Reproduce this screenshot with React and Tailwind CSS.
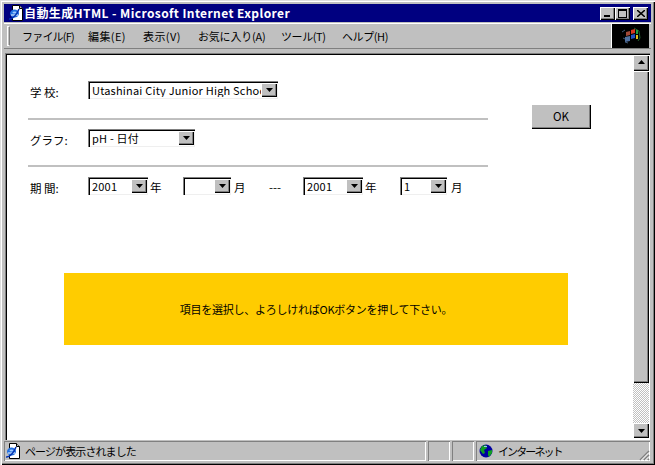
import React from 'react';

const font = { fontFamily: '"Noto Sans CJK JP", "Liberation Sans", sans-serif' };

const raised = 'shadow-[inset_1px_1px_0_#fff,inset_-1px_-1px_0_#000,inset_-2px_-2px_0_#808080]';
const panel = 'shadow-[inset_1px_1px_0_#808080,inset_-1px_-1px_0_#fff]';

function IeIcon() {
  return (
    <svg width="16" height="16" viewBox="0 0 16 16" className="shrink-0">
      <path d="M4.5 .5h7l3 3v12h-10z" fill="#fff" stroke="#000" />
      <path d="M11.5 .5v3h3" fill="#c0c0c0" stroke="#000" />
      <ellipse cx="6.5" cy="8.5" rx="4.5" ry="4" fill="#2070e0" />
      <ellipse cx="6.5" cy="7.5" rx="2" ry="1" fill="#a0c8ff" />
      <path d="M3 9.5h7v1H3z" fill="#fff" />
      <path d="M1 14c3 .5 8-4 10-10" fill="none" stroke="#0030b0" strokeWidth="1.5" />
    </svg>
  );
}

function Globe() {
  return (
    <svg width="14" height="14" viewBox="0 0 14 14" className="shrink-0">
      <circle cx="7" cy="7" r="6.5" fill="#0000a0" />
      <path d="M3 2l4-1 1 3-3 2 1 3-2 1-3-4zM9 7l4-1 0 3-3 4-1-2z" fill="#10a020" />
      <path d="M5 2h3v1H5z" fill="#a0c0ff" />
    </svg>
  );
}

function CtrlButton({ children, className = '' }) {
  return (
    <div className={`w-[15px] h-[13px] bg-[#c0c0c0] flex items-center justify-center ${raised} ${className}`}>
      {children}
    </div>
  );
}

function DropArrow() {
  return (
    <div className={`w-4 h-[14px] shrink-0 bg-[#c0c0c0] flex items-center justify-center ${raised}`}>
      <svg width="7" height="4" viewBox="0 0 7 4"><path d="M0 0h7L3.5 4z" fill="#000" /></svg>
    </div>
  );
}

function Select({ width, text }) {
  return (
    <div
      className="h-[18px] bg-white flex items-center justify-between pl-[4px] pr-[1px] shadow-[inset_1px_1px_0_#808080,inset_2px_2px_0_#000,inset_-1px_-1px_0_#efefef] shrink-0"
      style={{ width }}
    >
      <span className="text-[11px] leading-[14px] tracking-[0.2px] text-black whitespace-nowrap overflow-hidden">{text}</span>
      <DropArrow />
    </div>
  );
}

function Rule() {
  return <div className="h-[2px] w-[460px] bg-[#c0c0c0]" />;
}

function Label({ children }) {
  return <span className="w-[60px] pl-[2px] pt-[3px] shrink-0 text-[11.5px] leading-[16px] text-black">{children}</span>;
}

function Unit({ children, className = '' }) {
  return <span className={`pt-[1px] text-[11.5px] leading-[16px] text-black ${className}`}>{children}</span>;
}

function Scrollbar() {
  return (
    <div className="w-4 flex flex-col bg-[#c0c0c0] my-[2px] mr-[1px]">
      <div className={`h-4 pb-[2px] bg-[#c0c0c0] flex items-center justify-center ${raised}`}>
        <svg width="7" height="4" viewBox="0 0 7 4"><path d="M0 4h7L3.5 0z" fill="#000" /></svg>
      </div>
      <div className={`h-[312px] bg-[#c0c0c0] ${raised}`} />
      <div className="flex-1 bg-[repeating-conic-gradient(#c0c0c0_0_25%,#fff_0_50%)] bg-[length:2px_2px]" />
      <div className={`h-[15px] bg-[#c0c0c0] flex items-center justify-center ${raised}`}>
        <svg width="7" height="4" viewBox="0 0 7 4"><path d="M0 0h7L3.5 4z" fill="#000" /></svg>
      </div>
    </div>
  );
}

export default function App() {
  const menus = [
    ['ファイル(F)', 'w-[66px] tracking-[-0.8px]'],
    ['編集(E)', 'w-[55px] tracking-[0.4px]'],
    ['表示(V)', 'w-[55px] tracking-[0.4px]'],
    ['お気に入り(A)', 'w-[83px] tracking-[-0.2px]'],
    ['ツール(T)', 'w-[61px] tracking-[-0.4px]'],
    ['ヘルプ(H)', 'w-[60px] tracking-[-0.4px]'],
  ];

  return (
    <div className="w-[655px] h-[465px] bg-[#c0c0c0] flex flex-col p-[4px] shadow-[inset_1px_1px_0_#dfdfdf,inset_2px_2px_0_#fff,inset_-1px_-1px_0_#000,inset_-2px_-2px_0_#808080] overflow-hidden" style={font}>
      {/* Title bar */}
      <div className="h-[18px] bg-[#000080] flex items-center pl-[4px] pr-[3px] shrink-0">
        <IeIcon />
        <span className="text-[12px] leading-[16px] font-bold text-white tracking-[0.4px] whitespace-nowrap">自動生成HTML - Microsoft Internet Explorer</span>
        <div className="ml-auto flex items-center">
          <CtrlButton><div className="w-[6px] h-[2px] bg-black mt-[6px] mr-[2px]" /></CtrlButton>
          <CtrlButton><div className="w-[9px] h-[9px] border border-black border-t-2" /></CtrlButton>
          <CtrlButton className="ml-[3px]">
            <svg width="8" height="7" viewBox="0 0 8 7"><path d="M0 0l8 7M8 0L0 7" stroke="#000" strokeWidth="1.5" /></svg>
          </CtrlButton>
        </div>
      </div>

      {/* Menu bar */}
      <div className="h-[26px] mt-[1px] pr-[2px] flex items-stretch shrink-0 border-t border-t-white border-b border-b-[#808080]">
        <div className="w-[3px] my-[2px] ml-[3px] bg-[#c0c0c0] border-l border-l-white border-r border-r-[#808080] border-y border-y-white" />
        <div className="flex items-center pl-[12px] pb-[1px] flex-1">
          {menus.map(([m, w]) => (
            <span key={m} className={`${w} text-[11px] leading-[16px] text-black whitespace-nowrap`}>{m}</span>
          ))}
        </div>
        <div className="w-[38px] bg-black flex items-center justify-center shrink-0 border-l border-l-white">
          <svg width="20" height="18" viewBox="0 0 20 18">
            <path d="M1 5l3-2M2 11l2 1M4 15l3 1" stroke="#405878" />
            <path d="M13 1l5 3 1 7-2 3" fill="none" stroke="#206030" />
            <path d="M5 5l4-1v4l-4 1z" fill="#a04838" />
            <path d="M10 3l4-1v4l-4 1z" fill="#d83820" />
            <path d="M15 3h2v4h-2z" fill="#20a040" />
            <path d="M4 10l5-1v5l-5 1z" fill="#5070a0" />
            <path d="M10 8l4-1v4l-4 1z" fill="#2050c0" />
            <path d="M15 8h2v4h-2z" fill="#e0c020" />
          </svg>
        </div>
      </div>

      {/* Page */}
      <div className="mt-[4px] mr-[1px] flex-1 min-h-0 flex bg-white ml-[1px] shadow-[inset_1px_1px_0_#808080,inset_2px_2px_0_#000,inset_-1px_-1px_0_#fff]">
        <div className="flex-1 min-w-0 flex flex-col text-black">
          <div className="flex">
            <div className="pl-[23px] pt-[28px]">
              <div className="flex items-center h-[18px]">
                <Label>学 校:</Label>
                <Select width={190} text="Utashinai City Junior High School" />
              </div>
              <div className="mt-[19px]"><Rule /></div>
              <div className="mt-[9px] flex items-center h-[18px]">
                <Label>グラフ:</Label>
                <Select width={107} text="pH - 日付" />
              </div>
              <div className="mt-[18px]"><Rule /></div>
              <div className="mt-[10px] flex items-center h-[18px]">
                <Label>期 間:</Label>
                <Select width={60} text="2001" />
                <Unit className="ml-[2px] w-[33px]">年</Unit>
                <Select width={48} text="" />
                <Unit className="ml-[3px] w-[35px]">月</Unit>
                <Unit className="w-[34px]">---</Unit>
                <Select width={60} text="2001" />
                <Unit className="ml-[2px] w-[35px]">年</Unit>
                <Select width={47} text="1" />
                <Unit className="ml-[4px]">月</Unit>
              </div>
            </div>
            <button className={`ml-[43px] mt-[51px] w-[60px] h-[25px] bg-[#c0c0c0] text-[11.5px] text-black ${raised}`}>OK</button>
          </div>
          <div className="ml-[59px] mt-[78px] w-[504px] h-[72px] bg-[#ffcc00] flex items-center justify-center text-[11px] tracking-[-0.25px] text-black">
            項目を選択し、よろしければOKボタンを押して下さい。
          </div>
        </div>
        <Scrollbar />
      </div>

      {/* Status bar */}
      <div className="h-[20px] flex items-stretch shrink-0 mt-[1px] pr-[1px] text-[11px] text-black">
        <div className={`flex-1 flex items-center pl-[1px] gap-[4px] ${panel}`}>
          <IeIcon />
          <span className="whitespace-nowrap tracking-[-0.9px]">ページが表示されました</span>
        </div>
        <div className={`w-[22px] ml-[2px] ${panel}`} />
        <div className={`w-[22px] ml-[2px] ${panel}`} />
        <div className={`w-[174px] ml-[2px] flex items-center pl-[3px] gap-[5px] relative ${panel}`}>
          <Globe />
          <span className="whitespace-nowrap tracking-[-1.9px]">インターネット</span>
          <svg width="12" height="12" viewBox="0 0 12 12" className="absolute right-0 bottom-0">
            <path d="M11 2L2 11M11 6L6 11M11 10L10 11" stroke="#808080" strokeWidth="1.5" />
            <path d="M11 3.5L3.5 11M11 7.5L7.5 11" stroke="#fff" />
          </svg>
        </div>
      </div>
    </div>
  );
}
